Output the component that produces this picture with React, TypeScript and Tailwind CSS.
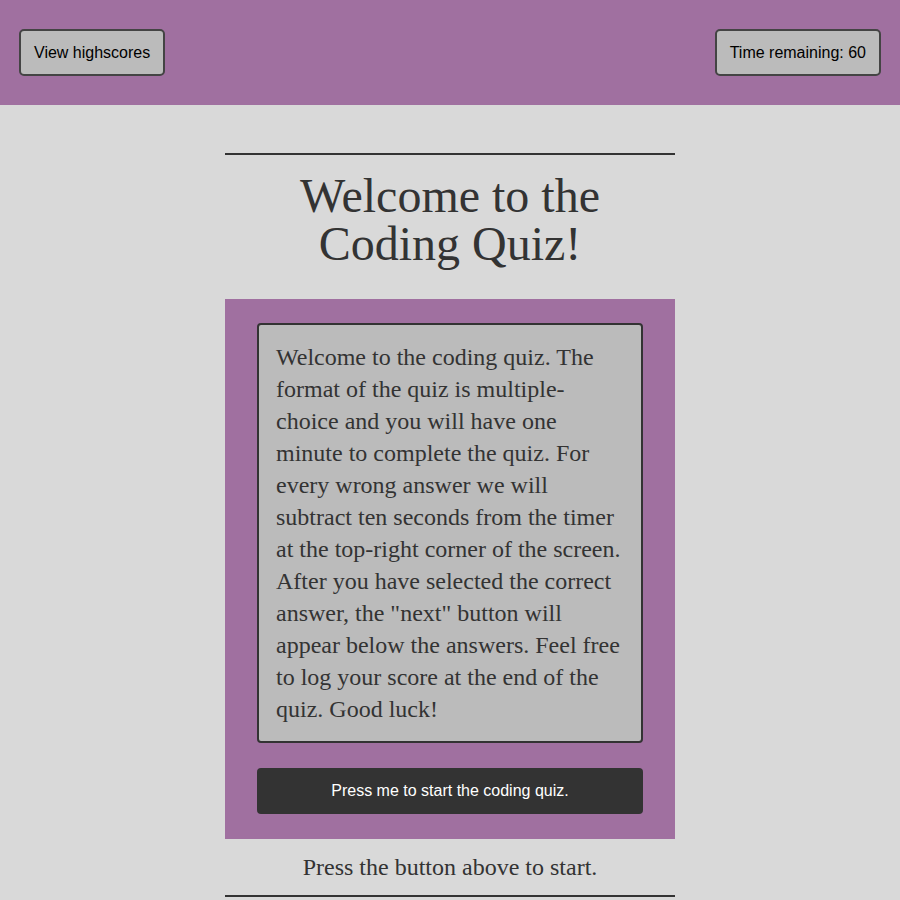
export default function App() {
  return (
    <div className="min-h-[900px] bg-[#d9d9d9] text-[#333]">
      <header className="flex h-[105px] items-center justify-between bg-[#a070a0] px-[19px] font-['Liberation_Sans',Arial,sans-serif]">
        <button
          type="button"
          className="h-[47px] rounded-[5px] border-2 border-[#444] bg-[#bbb] px-[13px] text-[16px] text-black"
        >
          View highscores
        </button>
        <button
          type="button"
          className="h-[47px] rounded-[5px] border-2 border-[#444] bg-[#bbb] px-[13px] text-[16px] text-black"
        >
          Time remaining: 60
        </button>
      </header>

      <main className="mx-auto w-[450px] pt-[48px] font-['Liberation_Serif','Times_New_Roman',serif]">
        <div className="h-[2px] bg-[#333]" />
        <h1 className="pt-[17px] pb-[31px] text-center text-[48px] leading-[48px]">
          Welcome to the
          <br />
          Coding Quiz!
        </h1>

        <section className="flex flex-col gap-[25px] bg-[#a070a0] px-[32px] pt-[24px] pb-[25px]">
          <div className="rounded-[4px] border-2 border-[#333] bg-[#bbb] px-[17px] py-[16px] text-[24px] leading-[32px]">
            Welcome to the coding quiz. The format of the quiz is multiple-choice and you will have one
            minute to complete the quiz. For every wrong answer we will subtract ten seconds from the
            timer at the top-right corner of the screen. After you have selected the correct answer, the
            "next" button will appear below the answers. Feel free to log your score at the end of the
            quiz. Good luck!
          </div>
          <button
            type="button"
            className="h-[46px] rounded-[4px] bg-[#333] font-['Liberation_Sans',Arial,sans-serif] text-[16px] text-white"
          >
            Press me to start the coding quiz.
          </button>
        </section>

        <p className="py-[12px] text-center text-[24px] leading-[32px]">Press the button above to start.</p>
        <div className="h-[2px] bg-[#333]" />
      </main>
    </div>
  );
}
